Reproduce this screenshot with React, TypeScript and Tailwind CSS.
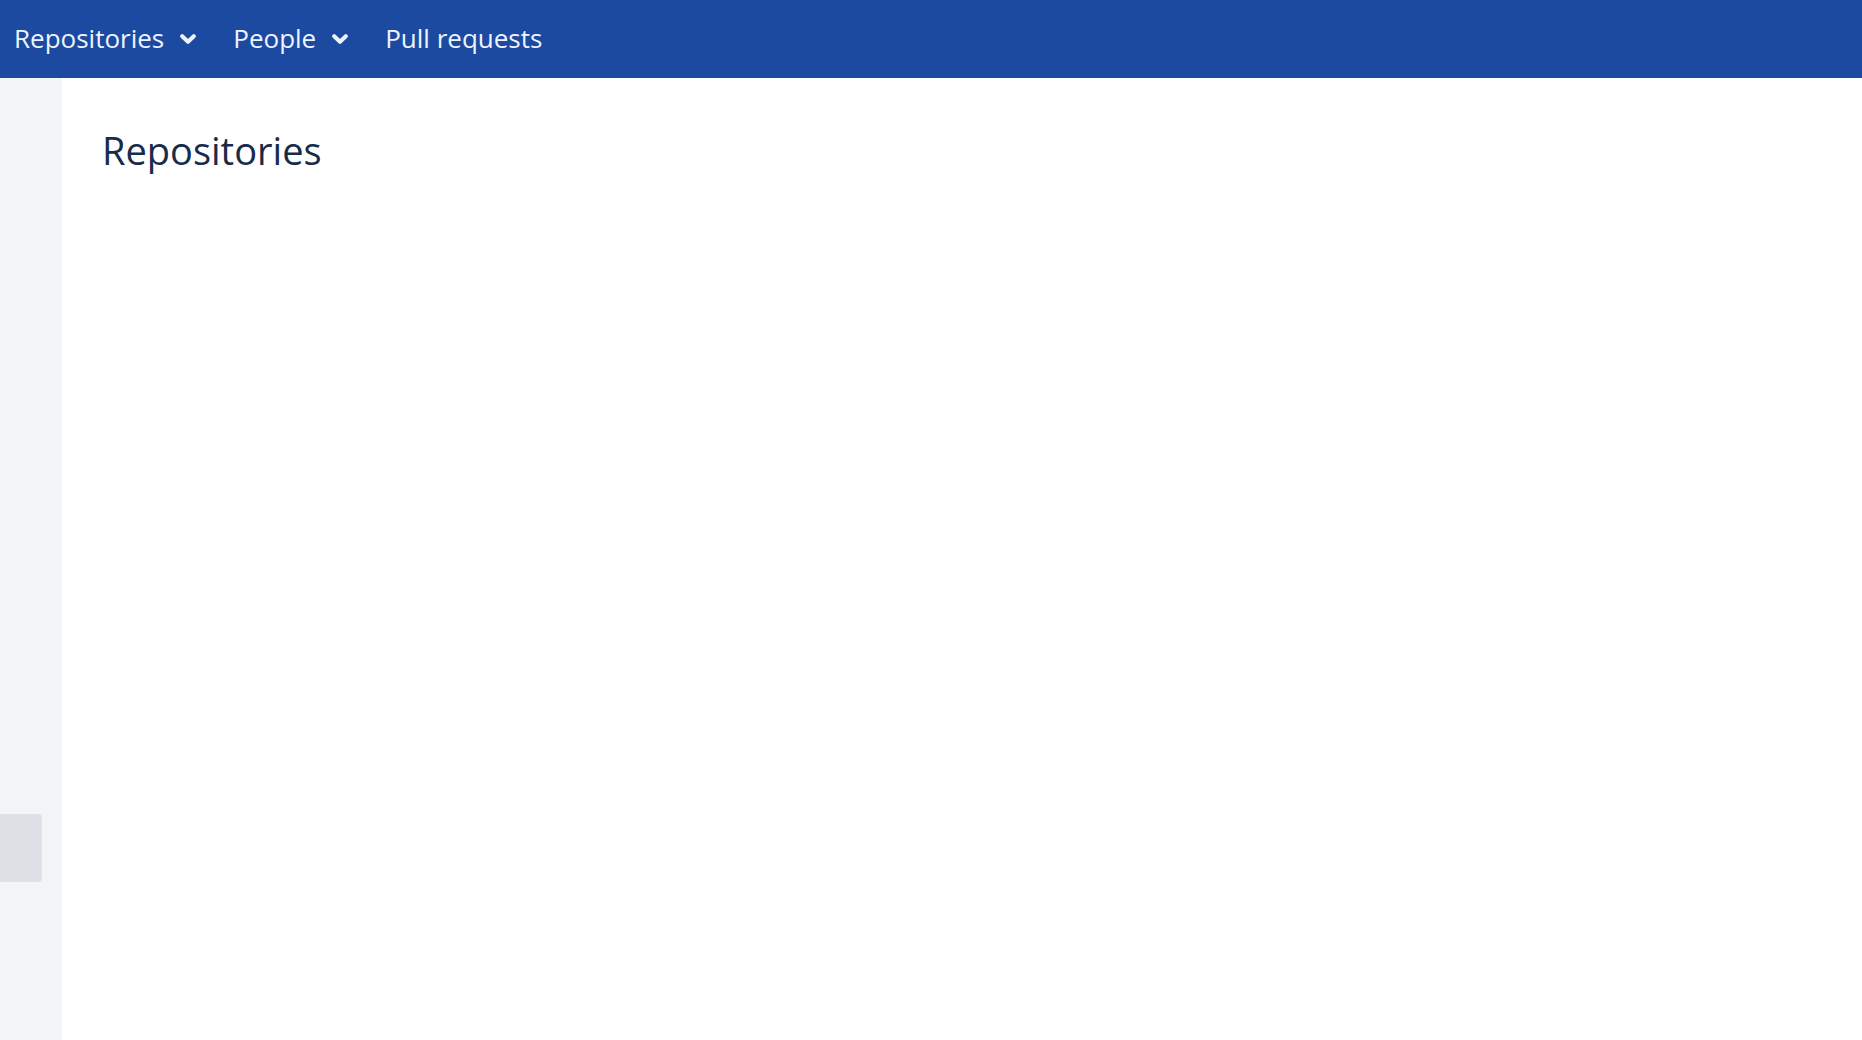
import { ReactNode } from 'react'

function Chevron() {
  return (
    <svg width="16" height="10" viewBox="0 0 16 10" className="ml-4 mt-[3px] shrink-0">
      <polyline points="2.2,2.2 8,7.8 13.8,2.2" fill="none" stroke="currentColor" strokeWidth="4" strokeLinecap="round" strokeLinejoin="round" />
    </svg>
  )
}

function NavItem({ children, dropdown }: { children: ReactNode; dropdown?: boolean }) {
  return (
    <button className="flex items-center text-[26px] leading-none text-[#eef4ff] pb-[3px]">
      <span>{children}</span>
      {dropdown && <Chevron />}
    </button>
  )
}

export default function App() {
  return (
    <div className="h-screen w-full flex flex-col bg-white" style={{ fontFamily: '"Open Sans", "Noto Sans", sans-serif' }}>
      {/* Top bar */}
      <header className="h-[78px] shrink-0 bg-[#1b4aa0] flex items-center pl-[14px] gap-[37px]">
        <NavItem dropdown>Repositories</NavItem>
        <NavItem dropdown>People</NavItem>
        <NavItem>Pull requests</NavItem>
      </header>

      <div className="flex-1 flex min-h-0">
        {/* Sidebar */}
        <aside className="w-[62px] shrink-0 bg-[#f4f5f7] flex flex-col">
          <div className="mt-auto mb-[158px] w-[42px] h-[68px] bg-[#dfe1e6] rounded-r-[3px]" />
        </aside>

        {/* Main */}
        <main className="flex-1 px-[40px] pt-[44px]">
          <h1 className="text-[38px] font-normal text-[#172b4d]">Repositories</h1>
        </main>
      </div>
    </div>
  )
}
